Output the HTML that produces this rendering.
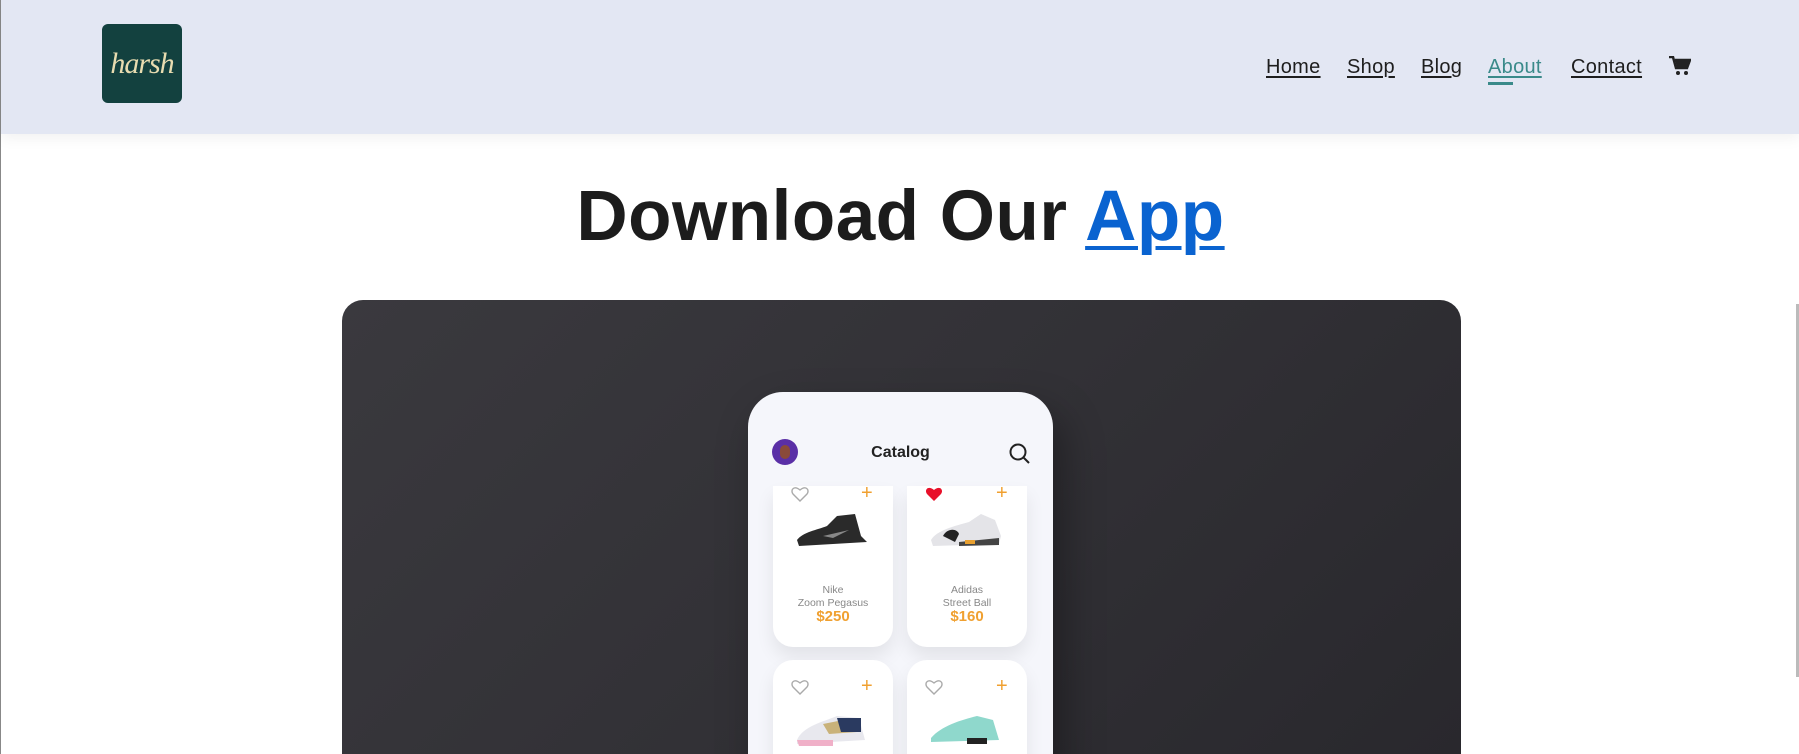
<!DOCTYPE html>
<html><head><meta charset="utf-8"><style>
*{margin:0;padding:0;box-sizing:border-box}
html,body{width:1799px;height:754px;overflow:hidden}
body{background:#fff;font-family:"Liberation Sans",sans-serif;position:relative;border-left:1px solid #888}
.hdr{position:absolute;left:0;top:0;width:1799px;height:134px;background:#e3e7f3;box-shadow:0 4px 14px rgba(0,0,0,.06)}
.logo{position:absolute;left:101px;top:24px;width:80px;height:79px;background:#13413f;border-radius:6px;color:#e8dcb0;font-family:"Liberation Serif",serif;font-style:italic;font-size:30px;text-align:center;line-height:79px;letter-spacing:-1px}
.nav a{position:absolute;top:56px;font-size:20px;color:#1e1e1e;text-decoration:underline;text-underline-offset:3px;letter-spacing:.3px}
.bar{position:absolute;left:1487px;top:82px;width:25px;height:3px;background:#3a8a8a}
h1{position:absolute;left:0;width:1799px;top:176px;text-align:center;font-size:71px;font-weight:bold;color:#1c1c1c;letter-spacing:0.5px}
h1 span{color:#0a63d0;text-decoration:underline;text-decoration-thickness:4px;text-underline-offset:6px}
.panel{position:absolute;left:341px;top:300px;width:1119px;height:454px;border-radius:21px 21px 0 0;background:linear-gradient(135deg,#3a393e 0%,#323136 50%,#29282d 100%);overflow:hidden}
.phone{position:absolute;left:406px;top:92px;width:305px;height:400px;border-radius:35px;background:#f5f6fb;box-shadow:10px 20px 40px rgba(0,0,0,.35);overflow:hidden}
.av{position:absolute;left:24px;top:47px;width:26px;height:26px;border-radius:50%;background:#5a2fa6}
.av:after{content:"";position:absolute;left:8px;top:6px;width:10px;height:14px;border-radius:5px;background:#8a4a3a}
.cat{position:absolute;left:0;width:305px;top:52px;text-align:center;font-size:16px;font-weight:bold;color:#222}
.card{position:absolute;width:120px;background:#fff;box-shadow:0 10px 18px rgba(0,0,0,.08)}
.t{position:absolute;width:120px;text-align:center;font-size:10.5px;color:#888;line-height:13px}
.p{position:absolute;width:120px;text-align:center;font-size:15px;font-weight:bold;color:#f0a030}
.pl{position:absolute;color:#f0a030;font-size:20px;line-height:20px}
.ic{position:absolute}
.sb{position:absolute;left:1795px;top:304px;width:4px;height:373px;background:#bbb}
</style></head><body>
<div class="hdr">
<div class="logo">harsh</div>
<div class="nav">
<a style="left:1265px">Home</a><a style="left:1346px">Shop</a><a style="left:1420px">Blog</a><a style="left:1487px;color:#3a8a8a">About</a><a style="left:1570px">Contact</a>
</div>
<div class="bar"></div>
<svg style="position:absolute;left:1668px;top:56px" width="22" height="20" viewBox="0 0 22 20"><path d="M0 1h4l3 11h11l3-8H6" fill="none" stroke="#222" stroke-width="2.5"/><path d="M6 4h15l-3 8H8z" fill="#222"/><circle cx="9" cy="17" r="2" fill="#222"/><circle cx="17" cy="17" r="2" fill="#222"/></svg>
</div>
<h1>Download Our <span>App</span></h1>
<div class="panel">
<div class="phone">
<div class="av"></div>
<div class="cat">Catalog</div>
<svg style="position:absolute;left:261px;top:51px" width="22" height="22" viewBox="0 0 22 22"><circle cx="9" cy="9" r="7.5" fill="none" stroke="#222" stroke-width="2"/><path d="M14.5 14.5L20 20" stroke="#222" stroke-width="2"/></svg>
<div class="card" style="left:25px;top:94px;height:161px;border-radius:0 0 20px 20px">
<svg style="position:absolute;left:20px;top:24px" width="80" height="40" viewBox="0 0 80 40"><path d="M4 30 C10 22 24 20 34 16 L44 6 L62 4 L68 26 L74 32 L6 36z" fill="#2a2a2a"/><path d="M30 26 L56 20 L40 28z" fill="#888"/></svg>
<div class="t" style="top:98px">Nike<br>Zoom Pegasus</div><div class="p" style="top:122px">$250</div>
</div>
<div class="card" style="left:159px;top:94px;height:161px;border-radius:0 0 20px 20px">
<svg style="position:absolute;left:22px;top:28px" width="76" height="36" viewBox="0 0 76 36"><path d="M2 26 C8 16 26 12 40 8 L52 0 L66 6 L72 22 L70 30 L4 32z" fill="#e4e4e8"/><path d="M14 22 C18 14 28 14 30 20 L26 28z" fill="#222"/><path d="M30 28 L70 24 L70 31 L30 32z" fill="#444"/><path d="M36 26h10v4H36z" fill="#e8a030"/></svg>
<div class="t" style="top:98px">Adidas<br>Street Ball</div><div class="p" style="top:122px">$160</div>
</div>
<div class="card" style="left:25px;top:268px;height:140px;border-radius:20px">
<svg style="position:absolute;left:20px;top:50px" width="80" height="40" viewBox="0 0 80 40"><path d="M4 30 C10 16 30 12 44 6 L66 8 L72 30 L4 34z" fill="#e8e8ee"/><path d="M30 14 L60 8 L64 22 L36 24z" fill="#c9b27a"/><path d="M44 8h24v14H48z" fill="#2a3a60"/><path d="M4 30 L40 30 L40 36 L6 36z" fill="#f0b0c8"/></svg>
</div>
<div class="card" style="left:159px;top:268px;height:140px;border-radius:20px">
<svg style="position:absolute;left:20px;top:50px" width="80" height="40" viewBox="0 0 80 40"><path d="M4 28 C14 16 34 10 50 6 L66 10 L72 30 L4 32z" fill="#8fd8cc"/><path d="M40 28h20v6H40z" fill="#222"/></svg>
</div>
<svg class="ic" style="left:43px;top:94px" width="18" height="16" viewBox="0 0 18 16"><path d="M9 15 L2 8 C-1 4 3 -1 9 4 C15 -1 19 4 16 8z" fill="none" stroke="#aaa" stroke-width="1.4"/></svg>
<svg class="ic" style="left:177px;top:94px" width="18" height="16" viewBox="0 0 18 16"><path d="M9 15 L2 8 C-1 4 3 -1 9 4 C15 -1 19 4 16 8z" fill="#e8102a"/></svg>
<svg class="ic" style="left:43px;top:287px" width="18" height="16" viewBox="0 0 18 16"><path d="M9 15 L2 8 C-1 4 3 -1 9 4 C15 -1 19 4 16 8z" fill="none" stroke="#aaa" stroke-width="1.4"/></svg>
<svg class="ic" style="left:177px;top:287px" width="18" height="16" viewBox="0 0 18 16"><path d="M9 15 L2 8 C-1 4 3 -1 9 4 C15 -1 19 4 16 8z" fill="none" stroke="#aaa" stroke-width="1.4"/></svg>
<div class="pl" style="left:113px;top:91px">+</div><div class="pl" style="left:248px;top:91px">+</div>
<div class="pl" style="left:113px;top:284px">+</div><div class="pl" style="left:248px;top:284px">+</div>
</div>
</div>
<div class="sb"></div>
</body></html>
